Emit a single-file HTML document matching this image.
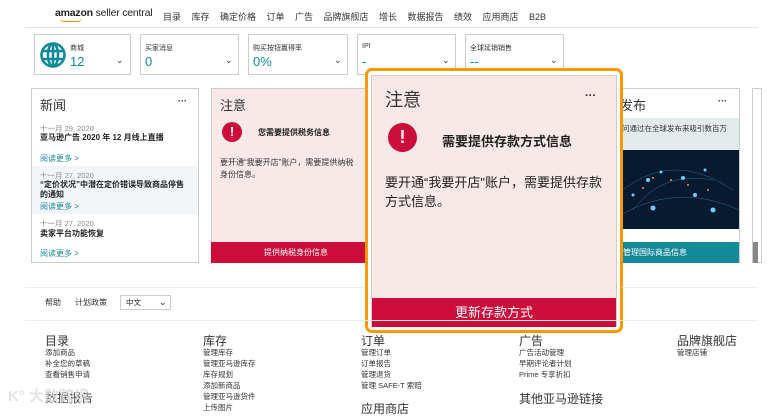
<!DOCTYPE html>
<html><head><meta charset="utf-8"><style>
*{margin:0;padding:0;box-sizing:border-box}
body{width:780px;height:408px;overflow:hidden;background:#fff;font-family:"Liberation Sans","Noto Sans CJK SC",sans-serif;color:#222;position:relative}
.a{position:absolute;white-space:nowrap}
.box{position:absolute;border:1px solid #ccc;background:#fff}
.nav{font-size:9px;color:#333}
.kl{font-size:7px;color:#333}
.kv{font-size:13px;color:#138a99}
.chev{font-size:9px;color:#333}
.lk{font-size:8px;color:#138a99}
.dt{font-size:7.5px;color:#888}
.nt{font-size:8px;font-weight:bold;color:#222}
.fh{font-size:12px;color:#333}
.fl{font-size:7.5px;color:#333;line-height:11px}
</style></head><body>
<!-- header -->
<div class="a" style="left:55px;top:7px;font-size:10.5px;color:#222;letter-spacing:-0.2px"><b>amazon</b> seller central</div>
<div class="a" style="left:60px;top:18px;width:22px;height:4px;border-bottom:1.5px solid #f90;border-radius:0 0 12px 12px"></div>
<div class="a nav" style="left:163px;top:10px;word-spacing:8px">目录 库存 确定价格 订单 广告 品牌旗舰店 增长 数据报告 绩效 应用商店 B2B</div>
<div class="a" style="left:25px;top:27px;width:733px;height:1px;background:#e4e4e4"></div>
<!-- kpis -->
<div class="box" style="left:34px;top:34px;width:97px;height:41px"></div>
<svg class="a" style="left:39px;top:41px" width="28" height="28" viewBox="0 0 28 28"><g fill="none" stroke="#138a99" stroke-width="2.6"><circle cx="14" cy="14" r="11.5"/><ellipse cx="14" cy="14" rx="5" ry="11.5"/><line x1="2.5" y1="10" x2="25.5" y2="10"/><line x1="2.5" y1="18" x2="25.5" y2="18"/><line x1="14" y1="2.5" x2="14" y2="25.5"/></g></svg>
<div class="a kl" style="left:70px;top:43px">商城</div><div class="a kv" style="left:70px;top:54px">12</div><div class="a chev" style="left:116px;top:55px">⌄</div>
<div class="box" style="left:140px;top:34px;width:99px;height:41px"></div>
<div class="a kl" style="left:145px;top:43px">买家消息</div><div class="a kv" style="left:145px;top:54px">0</div><div class="a chev" style="left:225px;top:55px">⌄</div>
<div class="box" style="left:248px;top:34px;width:100px;height:41px"></div>
<div class="a kl" style="left:253px;top:43px">购买按钮赢得率</div><div class="a kv" style="left:253px;top:54px">0%</div><div class="a chev" style="left:334px;top:55px">⌄</div>
<div class="box" style="left:357px;top:34px;width:99px;height:41px"></div>
<div class="a kl" style="left:362px;top:43px">IPI</div><div class="a kv" style="left:362px;top:54px">-</div><div class="a chev" style="left:442px;top:55px">⌄</div>
<div class="box" style="left:465px;top:34px;width:99px;height:41px"></div>
<div class="a kl" style="left:470px;top:43px">全球延销销售</div><div class="a kv" style="left:470px;top:54px">--</div><div class="a chev" style="left:550px;top:55px">⌄</div>
<!-- news -->
<div class="box" style="left:31px;top:88px;width:168px;height:175px"></div>
<div class="a" style="left:40px;top:95px;font-size:13px;color:#333">新闻</div><div class="a" style="left:178px;top:96px;font-size:9px;font-weight:bold">···</div>
<div class="a dt" style="left:40px;top:123px">十一月 29, 2020</div><div class="a nt" style="left:40px;top:132px">亚马逊广告 2020 年 12 月线上直播</div>
<div class="a lk" style="left:40px;top:153px">阅读更多 &gt;</div>
<div class="a" style="left:32px;top:166px;width:166px;height:48px;background:#f3f6f8"></div>
<div class="a dt" style="left:40px;top:170px">十一月 27, 2020</div>
<div class="a nt" style="left:40px;top:180px;line-height:10px">“定价状况”中潜在定价错误导致商品停售<br>的通知</div>
<div class="a lk" style="left:40px;top:201px">阅读更多 &gt;</div>
<div class="a dt" style="left:40px;top:218px">十一月 27, 2020</div><div class="a nt" style="left:40px;top:228px">卖家平台功能恢复</div>
<div class="a lk" style="left:40px;top:248px">阅读更多 &gt;</div>
<!-- notice small -->
<div class="box" style="left:211px;top:88px;width:160px;height:175px;background:#f8e8e8"></div>
<div class="a" style="left:220px;top:95px;font-size:13px;color:#333">注意</div>
<div class="a" style="left:222px;top:122px;width:20px;height:20px;border-radius:50%;background:#cc0c39;color:#fff;font-size:13px;font-weight:bold;text-align:center;line-height:20px">!</div>
<div class="a nt" style="left:258px;top:127px">您需要提供税务信息</div>
<div class="a" style="left:220px;top:157px;font-size:8px;line-height:12px;color:#333">要开通“我要开店”账户，需要提供纳税<br>身份信息。</div>
<div class="a" style="left:211px;top:242px;width:160px;height:21px;background:#cc0c39;color:#fff;font-size:8px;line-height:21px;padding-left:53px">提供纳税身份信息</div>
<!-- global -->
<div class="box" style="left:612px;top:88px;width:128px;height:175px"></div>
<div class="a" style="left:620px;top:95px;font-size:13px;color:#333">发布</div><div class="a" style="left:718px;top:96px;font-size:9px;font-weight:bold">···</div>
<div class="a" style="left:613px;top:118px;width:126px;height:32px;background:#e3eaec"></div>
<div class="a" style="left:622px;top:123px;font-size:7.5px;color:#333">问通过在全球发布来吸引数百万</div>
<svg class="a" style="left:613px;top:150px" width="126" height="79" viewBox="0 0 126 79"><rect width="126" height="79" fill="#071a30"/><g fill="none" stroke="#4b8fb8" stroke-width=".5" opacity=".7"><path d="M0 70Q60 30 126 60"/><path d="M10 40Q60 0 120 40"/><path d="M20 60Q50 20 100 30"/></g><g fill="#6cd0ff"><circle cx="35" cy="30" r="2"/><circle cx="48" cy="22" r="1.5"/><circle cx="70" cy="28" r="2"/><circle cx="82" cy="45" r="2"/><circle cx="40" cy="58" r="2.5"/><circle cx="100" cy="60" r="2.5"/><circle cx="20" cy="45" r="1.5"/><circle cx="92" cy="20" r="1.5"/></g><g fill="#d9a050"><circle cx="40" cy="28" r="1"/><circle cx="58" cy="30" r="1"/><circle cx="75" cy="35" r="1"/><circle cx="95" cy="40" r="1"/><circle cx="30" cy="38" r="1"/></g></svg>
<div class="a" style="left:613px;top:242px;width:126px;height:21px;background:#138a99;color:#fff;font-size:8px;line-height:21px;padding-left:10px">管理国际商品信息</div>
<div class="box" style="left:752px;top:88px;width:10px;height:175px"></div>
<div class="a" style="left:753px;top:242px;width:5px;height:21px;background:#888"></div>
<!-- overlay -->
<div class="a" style="left:365px;top:68px;width:258px;height:265px;border:3px solid #f90;border-radius:7px;background:#fff"></div>
<div class="a" style="left:371px;top:75px;width:246px;height:252px;background:#f8e8e8;border:1px solid #ccc"></div>
<div class="a" style="left:385px;top:86px;font-size:18px;color:#333">注意</div>
<div class="a" style="left:585px;top:90px;font-size:11px;font-weight:bold">···</div>
<div class="a" style="left:388px;top:123px;width:29px;height:29px;border-radius:50%;background:#cc0c39;color:#fff;font-size:18px;font-weight:bold;text-align:center;line-height:29px">!</div>
<div class="a" style="left:442px;top:131px;font-size:13px;font-weight:bold;color:#222">需要提供存款方式信息</div>
<div class="a" style="left:385px;top:173px;font-size:13px;line-height:19px;color:#222">要开通“我要开店"账户，需要提供存款<br>方式信息。</div>
<div class="a" style="left:372px;top:298px;width:244px;height:29px;background:#cc0c39;color:#fff;font-size:13px;text-align:center;line-height:29px">更新存款方式</div>
<!-- footer -->
<div class="a" style="left:25px;top:287px;width:340px;height:1px;background:#eee"></div>
<div class="a" style="left:622px;top:287px;width:136px;height:1px;background:#eee"></div>
<div class="a" style="left:45px;top:297px;font-size:8px;color:#333">帮助</div>
<div class="a" style="left:75px;top:297px;font-size:8px;color:#333">计划政策</div>
<div class="a" style="left:120px;top:295px;width:51px;height:15px;border:1px solid #ccc;font-size:7.5px;line-height:13px;padding-left:5px">中文<span style="position:absolute;left:38px;font-size:9px">⌄</span></div>
<div class="a" style="left:25px;top:320px;width:733px;height:1px;background:#eee"></div>
<div class="a fh" style="left:45px;top:332px">目录</div>
<div class="a fl" style="left:45px;top:347px">添加商品<br>补全您的草稿<br>查看销售申请</div>
<div class="a fh" style="left:45px;top:389px;color:#444">数据报告</div>
<div class="a fh" style="left:203px;top:332px">库存</div>
<div class="a fl" style="left:203px;top:347px">管理库存<br>管理亚马逊库存<br>库存规划<br>添加新商品<br>管理亚马逊货件<br>上传图片</div>
<div class="a fh" style="left:361px;top:332px">订单</div>
<div class="a fl" style="left:361px;top:347px">管理订单<br>订单报告<br>管理退货<br>管理 SAFE-T 索赔</div>
<div class="a fh" style="left:361px;top:400px">应用商店</div>
<div class="a fh" style="left:519px;top:332px">广告</div>
<div class="a fl" style="left:519px;top:347px">广告活动管理<br>早期评论者计划<br>Prime 专享折扣</div>
<div class="a fh" style="left:519px;top:390px">其他亚马逊链接</div>
<div class="a fh" style="left:677px;top:332px">品牌旗舰店</div>
<div class="a fl" style="left:677px;top:347px">管理店铺</div>
<div class="a" style="left:8px;top:385px;font-size:15px;color:#ddd;font-weight:bold;opacity:.8">K° 大数跨境</div>
</body></html>
